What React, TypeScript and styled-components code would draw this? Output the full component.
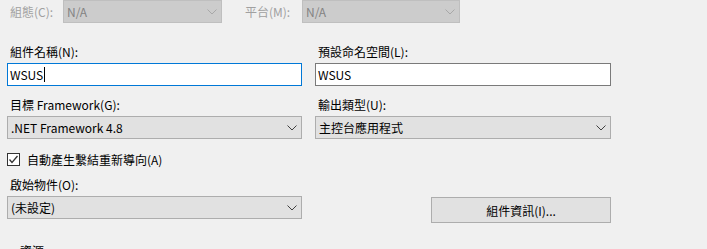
import React from 'react';
import styled, { createGlobalStyle } from 'styled-components';

const Global = createGlobalStyle`
  html, body {
    margin: 0;
    padding: 0;
    background: #f0f0f0;
    overflow: hidden;
  }
  body {
    font-family: "Noto Sans CJK TC", "Noto Sans", sans-serif;
    font-size: 12px;
    color: #000;
  }
`;

const Page = styled.div`
  width: 707px;
  height: 249px;
  overflow: hidden;
  display: flex;
  flex-direction: column;
`;

const TopRow = styled.div`
  display: flex;
  align-items: center;
  height: 24px;
  padding-left: 10px;
`;

const TopLabel = styled.span<{ $w: number; $gap?: number }>`
  width: ${p => p.$w}px;
  margin-left: ${p => p.$gap ?? 0}px;
  color: #a0a0a0;
  line-height: 16px;
  white-space: nowrap;
`;

const Separator = styled.div`
  height: 1px;
  background: #a0a0a0;
  margin-top: 15px;
`;

const Form = styled.div`
  display: grid;
  grid-template-columns: 295px 296px;
  column-gap: 13px;
  padding-left: 7px;
`;

const Field = styled.div<{ $top: number }>`
  display: flex;
  flex-direction: column;
  gap: 3px;
  margin-top: ${p => p.$top}px;
`;

const Label = styled.span`
  padding-left: 3px;
  line-height: 16px;
  white-space: nowrap;
`;

const TextBox = styled.div<{ $focused?: boolean }>`
  height: 23px;
  box-sizing: border-box;
  border: 1px solid ${p => (p.$focused ? '#0078d7' : '#7a7a7a')};
  background: #fff;
  display: flex;
  align-items: center;
  padding-left: 2px;
  line-height: 16px;
`;

const Caret = styled.span`
  display: inline-block;
  width: 1px;
  height: 15px;
  background: #000;
  margin-left: 1px;
`;

const Combo = styled.div<{ $disabled?: boolean; $w?: number }>`
  height: 23px;
  ${p => (p.$w ? `width: ${p.$w}px;` : '')}
  box-sizing: border-box;
  border: 1px solid ${p => (p.$disabled ? '#bfbfbf' : '#adadad')};
  background: ${p => (p.$disabled ? '#cccccc' : '#e1e1e1')};
  color: ${p => (p.$disabled ? '#838383' : '#000')};
  display: flex;
  align-items: center;
  justify-content: space-between;
  padding: 0 4px 0 3px;
  line-height: 16px;
  flex-shrink: 0;
`;

const CheckRow = styled.label`
  grid-column: 1 / span 2;
  display: flex;
  align-items: center;
  gap: 7px;
  margin-top: 14px;
  height: 13px;
  line-height: 16px;
`;

const Box = styled.span`
  width: 13px;
  height: 13px;
  box-sizing: border-box;
  border: 1px solid #333;
  background: #fff;
  display: flex;
  align-items: center;
  justify-content: center;
`;

const ButtonCell = styled.div`
  display: flex;
  align-items: flex-end;
  justify-content: flex-end;
`;

const Button = styled.div`
  width: 180px;
  height: 26px;
  box-sizing: border-box;
  border: 1px solid #adadad;
  background: #e1e1e1;
  display: flex;
  align-items: center;
  justify-content: center;
  margin-bottom: -4px;
`;

const Section = styled.div`
  padding-left: 20px;
  margin-top: 24px;
  line-height: 16px;
`;

const Chevron = ({ light }: { light?: boolean }) => (
  <svg width="10" height="6" viewBox="0 0 10 6">
    <polyline
      points="0.5,0.5 5,5 9.5,0.5"
      fill="none"
      stroke={light ? '#a8a8a8' : '#404040'}
      strokeWidth="1"
    />
  </svg>
);

const Check = () => (
  <svg width="11" height="11" viewBox="0 0 11 11">
    <polyline points="1.5,5.5 4,8.5 9.5,2" fill="none" stroke="#333" strokeWidth="1.3" />
  </svg>
);

export default function App() {
  return (
    <Page>
      <Global />
      <TopRow>
        <TopLabel $w={53}>組態(C):</TopLabel>
        <Combo $disabled $w={159}>
          <span>N/A</span>
          <Chevron light />
        </Combo>
        <TopLabel $w={57} $gap={23}>平台(M):</TopLabel>
        <Combo $disabled $w={158}>
          <span>N/A</span>
          <Chevron light />
        </Combo>
      </TopRow>
      <Separator />
      <Form>
        <Field $top={6}>
          <Label>組件名稱(N):</Label>
          <TextBox $focused>
            WSUS
            <Caret />
          </TextBox>
        </Field>
        <Field $top={6}>
          <Label>預設命名空間(L):</Label>
          <TextBox>WSUS</TextBox>
        </Field>
        <Field $top={11}>
          <Label>目標 Framework(G):</Label>
          <Combo>
            <span>.NET Framework 4.8</span>
            <Chevron />
          </Combo>
        </Field>
        <Field $top={11}>
          <Label>輸出類型(U):</Label>
          <Combo>
            <span>主控台應用程式</span>
            <Chevron />
          </Combo>
        </Field>
        <CheckRow>
          <Box>
            <Check />
          </Box>
          自動產生繫結重新導向(A)
        </CheckRow>
        <Field $top={11}>
          <Label>啟始物件(O):</Label>
          <Combo>
            <span>(未設定)</span>
            <Chevron />
          </Combo>
        </Field>
        <ButtonCell>
          <Button>組件資訊(I)...</Button>
        </ButtonCell>
      </Form>
      <Section>資源</Section>
    </Page>
  );
}
